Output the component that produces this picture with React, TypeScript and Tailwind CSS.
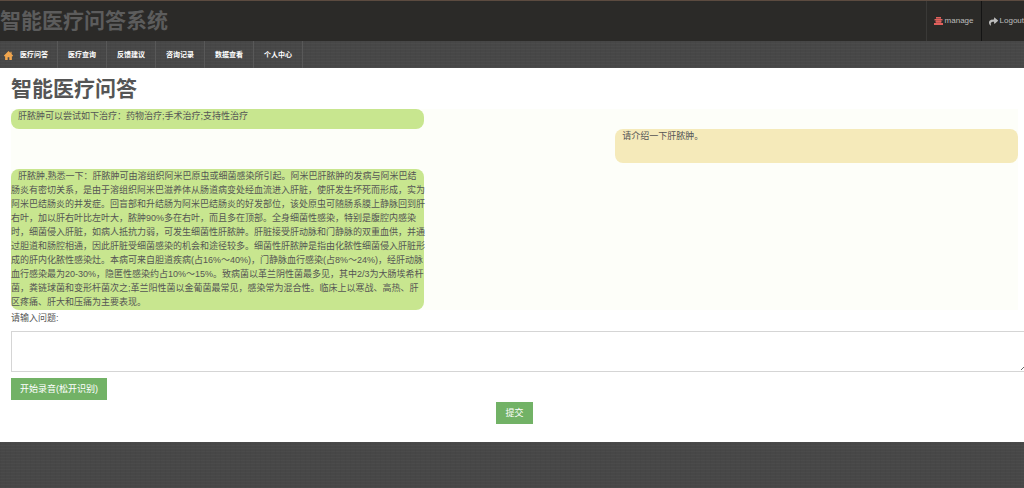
import { FaShare } from "react-icons/fa";

const navItems = ["医疗问答", "医疗查询", "反馈建议", "咨询记录", "数据查看", "个人中心"];

const answer = [
  "肝脓肿,熟悉一下：肝脓肿可由溶组织阿米巴原虫或细菌感染所引起。阿米巴肝脓肿的发病与阿米巴结",
  "肠炎有密切关系，是由于溶组织阿米巴滋养体从肠道病变处经血流进入肝脏，使肝发生坏死而形成，实为",
  "阿米巴结肠炎的并发症。回盲部和升结肠为阿米巴结肠炎的好发部位，该处原虫可随肠系膜上静脉回到肝",
  "右叶，加以肝右叶比左叶大，脓肿90%多在右叶，而且多在顶部。全身细菌性感染，特别是腹腔内感染",
  "时，细菌侵入肝脏，如病人抵抗力弱，可发生细菌性肝脓肿。肝脏接受肝动脉和门静脉的双重血供，并通",
  "过胆道和肠腔相通，因此肝脏受细菌感染的机会和途径较多。细菌性肝脓肿是指由化脓性细菌侵入肝脏形",
  "成的肝内化脓性感染灶。本病可来自胆道疾病(占16%～40%)，门静脉血行感染(占8%～24%)，经肝动脉",
  "血行感染最为20-30%，隐匿性感染约占10%～15%。致病菌以革兰阴性菌最多见，其中2/3为大肠埃希杆",
  "菌，粪链球菌和变形杆菌次之;革兰阳性菌以金葡菌最常见，感染常为混合性。临床上以寒战、高热、肝",
  "区疼痛、肝大和压痛为主要表现。",
];

function ManageIcon() {
  return (
    <svg viewBox="0 0 9 8" className="h-2 w-[9px] shrink-0" fill="#e0605c">
      <path d="M2 0h5v1.6H2zM0.5 2h8v1.6h-8zM1.5 4h6v1.6h-6zM0 6h9v2H0z" />
      <path d="M2 1.6h5v2.4H2zM2 3.6h5v2.4H2z" opacity="0.6" />
    </svg>
  );
}

function HomeIcon() {
  return (
    <svg viewBox="0 0 16 16" className="h-[9px] w-[9px] shrink-0" fill="#f0a54e">
      <path d="M8 0 0 8v1.5h2V16h4.5v-5h3v5H14V9.500h2V8l-2.500-2.500V1.500h-2v2z" />
    </svg>
  );
}

function Header() {
  return (
    <header className="flex h-[41px] items-stretch justify-between border-t border-[#5c4b40] bg-[#2b2a28]">
      <h1 className="self-center text-[21px] leading-6 font-bold whitespace-nowrap text-[#5c5c5c]">
        智能医疗问答系统
      </h1>
      <div className="flex text-[8px] text-[#bdbdbd]">
        <a href="#manage" className="flex items-center gap-[2px] border-l border-[#3a3937] px-[7px]">
          <ManageIcon />
          manage
        </a>
        <a href="#logout" className="flex items-center gap-[2px] border-l border-[#141414] pl-[7px]">
          <FaShare className="h-[9px] w-[9px] shrink-0" />
          Logout
        </a>
      </div>
    </header>
  );
}

function Nav() {
  return (
    <nav className="flex h-[27px] text-[7px] font-bold text-white">
      {navItems.map((item, i) => (
        <a
          key={item}
          href="#"
          className={`flex items-center border-r border-[#585858] pt-[2px] whitespace-nowrap ${i === 0 ? "gap-[7px] pr-[9px] pl-1" : "px-[10px]"}`}
        >
          {i === 0 && <HomeIcon />}
          {item}
        </a>
      ))}
    </nav>
  );
}

function Chat() {
  return (
    <section className="flex flex-col items-start bg-[#fdfef9] text-[9px] leading-[14px]">
      <p className="h-5 w-[41%] rounded-lg bg-[#c8e68f] indent-[7px]">
        肝脓肿可以尝试如下治疗：药物治疗;手术治疗;支持性治疗
      </p>
      <p className="h-[34px] w-2/5 self-end rounded-lg bg-[#f5eaba] indent-[7px]">请介绍一下肝脓肿。</p>
      <p className="mt-[6px] w-[41%] rounded-lg bg-[#c8e68f] pb-px indent-[7px]">
        {answer.map((line, i) => (
          <span key={i} className={`block whitespace-nowrap ${i > 0 ? "indent-0" : ""}`}>
            {line}
          </span>
        ))}
      </p>
    </section>
  );
}

export default function App() {
  return (
    <div className="min-h-screen overflow-hidden bg-[#474747] bg-[repeating-linear-gradient(0deg,#ffffff05_0_1px,transparent_1px_3px),repeating-linear-gradient(90deg,#00000008_0_1px,transparent_1px_5px)] font-['Liberation_Sans','Noto_Sans_CJK_SC',sans-serif]">
      <Header />
      <Nav />
      <main className="bg-white pt-2 pr-[6px] pb-[18px] pl-[11px] text-[#555555]">
        <h2 className="mb-2 text-[21px] leading-[25px] font-bold">智能医疗问答</h2>
        <Chat />
        <form onSubmit={(e) => e.preventDefault()} className="text-[9px]">
          <label htmlFor="question" className="block pt-px leading-[14px]">
            请输入问题:
          </label>
          <textarea
            id="question"
            className="mt-[6px] block h-[41px] w-[calc(100%+12px)] border border-[#d5d5d5] bg-white p-1"
          />
          <button type="button" className="mt-[6px] block h-[22px] bg-[#72b266] px-[9px] pt-px text-white">
            开始录音(松开识别)
          </button>
          <button type="submit" className="mx-auto mt-[2px] block h-[22px] bg-[#72b266] px-[9px] pt-px text-white">
            提交
          </button>
        </form>
      </main>
    </div>
  );
}
